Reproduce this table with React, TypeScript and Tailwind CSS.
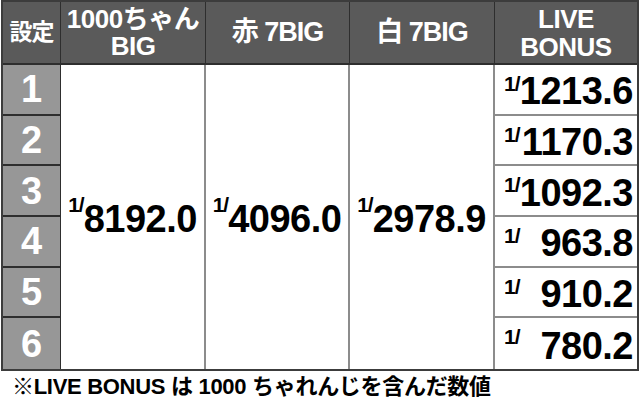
const font = { fontFamily: '"Liberation Sans", "Noto Sans CJK JP", sans-serif' };

const live = ["1213.6", "1170.3", "1092.3", "963.8", "910.2", "780.2"];
const mains = ["8192.0", "4096.0", "2978.9"];

const Frac = ({ value }: { value: string }) => (
  <div className="flex items-start">
    <span className="text-[21px] font-bold leading-none mt-[-6px] tracking-[-1px]">1/</span>
    <span className="text-[38px] font-bold leading-none tracking-[-0.5px]">{value}</span>
  </div>
);

const App = () => {
  return (
    <div className="w-[640px] h-[402px] bg-white text-black" style={font}>
      <div className="ml-[1px] w-[638px] h-[371px] border-2 border-[#3c3c3c] grid grid-cols-[58px_145px_144px_145px_1fr] grid-rows-[63px_repeat(6,1fr)]">
        {/* header */}
        <div className="row-start-1 col-start-1 bg-[#5a5a5a] border-r border-b-2 border-[#2e2e2e] flex items-center justify-center text-white font-bold text-[23px] tracking-[-1px]">
          設定
        </div>
        <div className="row-start-1 col-start-2 bg-[#5a5a5a] border-r border-b-2 border-[#2e2e2e] flex flex-col items-center justify-center text-white font-bold text-[26px] leading-[27px] tracking-[-0.5px]">
          <span>1000ちゃん</span>
          <span>BIG</span>
        </div>
        <div className="row-start-1 col-start-3 bg-[#5a5a5a] border-r border-b-2 border-[#2e2e2e] flex items-center justify-center text-white font-bold text-[27px] tracking-[-1px]">
          赤 7BIG
        </div>
        <div className="row-start-1 col-start-4 bg-[#5a5a5a] border-r border-b-2 border-[#2e2e2e] flex items-center justify-center text-white font-bold text-[27px] tracking-[-1px]">
          白 7BIG
        </div>
        <div className="row-start-1 col-start-5 bg-[#5a5a5a] border-b-2 border-[#2e2e2e] flex flex-col items-center justify-center text-white font-bold text-[26px] leading-[28px] tracking-[-0.5px]">
          <span>LIVE</span>
          <span>BONUS</span>
        </div>

        {/* setting numbers */}
        {[1, 2, 3, 4, 5, 6].map((n, i) => (
          <div
            key={n}
            className={`col-start-1 bg-[#979797] border-r border-[#2e2e2e] ${
              i < 5 ? "border-b-2" : ""
            } flex items-center justify-center text-white font-bold text-[38px] leading-none`}
            style={{ gridRowStart: i + 2 }}
          >
            {n}
          </div>
        ))}

        {/* merged columns */}
        {mains.map((m, i) => (
          <div
            key={m}
            className="row-start-2 row-span-6 border-r-2 border-[#8c8c8c] flex items-center justify-center pt-[4px]"
            style={{ gridColumnStart: i + 2 }}
          >
            <Frac value={m} />
          </div>
        ))}

        {/* live bonus */}
        {live.map((v, i) => (
          <div
            key={v}
            className={`col-start-5 ${
              i < 5 ? "border-b-2" : ""
            } border-[#8c8c8c] flex items-center justify-between pl-[9px] pr-[4px] pt-[4px]`}
            style={{ gridRowStart: i + 2 }}
          >
            <span className="self-start mt-[4px] text-[21px] font-bold leading-none tracking-[-1px]">1/</span>
            <span className="text-[38px] font-bold leading-none tracking-[-0.5px]">{v}</span>
          </div>
        ))}
      </div>
      <div className="pl-[12px] pt-[2px] font-bold text-[22px] leading-[28px] tracking-[-0.3px]">
        ※LIVE BONUS は 1000 ちゃれんじを含んだ数値
      </div>
    </div>
  );
};

export default App;
